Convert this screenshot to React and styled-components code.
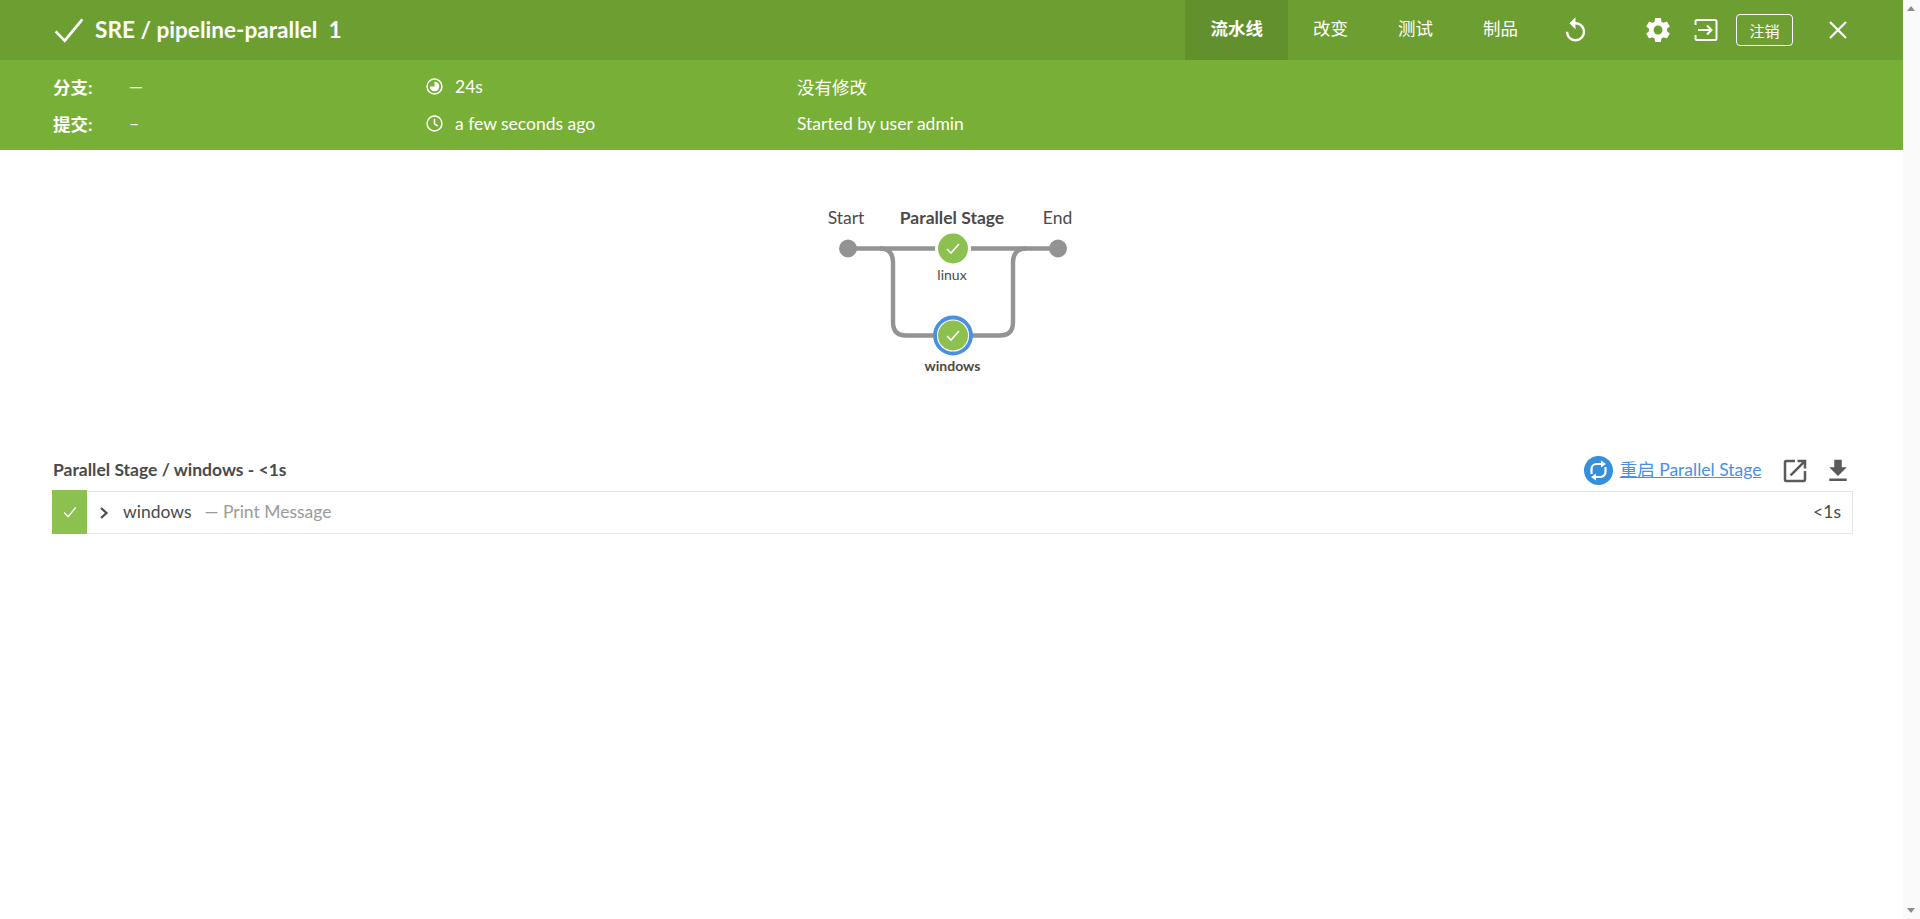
import React from "react";
import styled, { createGlobalStyle } from "styled-components";
import { MdFileDownload, MdOpenInNew, MdReplay, MdSettings } from "react-icons/md";

const GlobalStyle = createGlobalStyle`
  html, body {
    margin: 0;
    padding: 0;
    background: #fff;
  }
  body {
    font-family: Lato, "Noto Sans CJK SC", sans-serif;
    color: #4a4a4a;
    font-size: 17.5px;
  }
`;

const Page = styled.div`
  width: 1903px;
  min-height: 919px;
`;

const TopBar = styled.div`
  height: 60px;
  background: #6d9e32;
  color: #fff;
  display: flex;
  align-items: center;
  padding-left: 53px;
`;

const Title = styled.h1`
  margin: 0 0 2px 10px;
  font-size: 22.6px;
  font-weight: 700;
  white-space: pre;
  flex: 1;
`;

const Tabs = styled.nav`
  display: flex;
  align-self: stretch;
`;

const Tab = styled.a`
  display: flex;
  align-items: center;
  padding: 0 25px 6px;
  font-size: 17.5px;
  font-weight: ${(p) => (p.$active ? 700 : 400)};
  background: ${(p) => (p.$active ? "#61902c" : "transparent")};
`;

const IconSlot = styled.span`
  display: flex;
  align-items: center;
  justify-content: center;
  width: ${(p) => p.$w}px;
  margin-left: ${(p) => p.$ml || 0}px;
`;

const Logout = styled.button`
  width: 57px;
  height: 32px;
  margin-left: 18.5px;
  border: 1px solid #fff;
  border-radius: 4px;
  background: transparent;
  color: #fff;
  font: 15px Lato, "Noto Sans CJK SC", sans-serif;
  padding: 0;
`;

const SubBar = styled.div`
  height: 90px;
  box-sizing: border-box;
  background: #78b037;
  color: #fff;
  padding: 8px 53px 0;
  display: grid;
  grid-template-columns: 76px 297px 371px 1fr;
  grid-auto-rows: 37px;
  align-items: center;
  font-size: 17.5px;
`;

const Label = styled.strong`
  font-weight: 700;
`;

const WithIcon = styled.span`
  display: flex;
  align-items: center;
  gap: 12px;
`;

const Main = styled.main`
  padding: 0 50px 0 53px;
`;

const GraphWrap = styled.div`
  display: flex;
  justify-content: center;
  padding-top: 50px;
  height: 300px;
  box-sizing: border-box;
  svg text {
    font-family: Lato, "Noto Sans CJK SC", sans-serif;
    fill: #4a4a4a;
  }
`;

const LogHead = styled.div`
  display: flex;
  align-items: center;
  justify-content: space-between;
  height: 41px;
`;

const LogTitle = styled.h2`
  margin: 0 0 2px;
  font-size: 17.5px;
  font-weight: 700;
`;

const Actions = styled.div`
  display: flex;
  align-items: center;
`;

const RestartLink = styled.a`
  display: flex;
  align-items: center;
  gap: 7px;
  color: #4a90e2;
  font-size: 17.5px;
  span {
    text-decoration: underline;
    margin-bottom: 4px;
  }
`;

const ActionIcon = styled.span`
  display: flex;
  margin-left: ${(p) => p.$ml}px;
  color: #5a5a5a;
`;

const StepRow = styled.div`
  display: flex;
  align-items: center;
  height: 43px;
  box-sizing: border-box;
  border: 1px solid #e4e4e4;
  border-left: 0;
  padding-right: 11px;
`;

const StatusBox = styled.div`
  width: 35px;
  height: 44px;
  margin: -1px 0 0 -1px;
  background: #8cc04f;
  display: flex;
  align-items: center;
  justify-content: center;
`;

const Chevron = styled.span`
  display: flex;
  margin-left: 11px;
`;

const StepName = styled.span`
  margin: 0 0 2px 13px;
  font-size: 17.5px;
`;

const StepDesc = styled.span`
  margin: 0 0 2px 13px;
  font-size: 17.5px;
  color: #9b9b9b;
  flex: 1;
`;

const StepTime = styled.span`
  margin-bottom: 2px;
  font-size: 17.5px;
`;

const ScrollTrack = styled.div`
  position: fixed;
  top: 0;
  right: 0;
  bottom: 0;
  width: 17px;
  background: #fafafa;
`;

const ArrowUp = styled.div`
  position: absolute;
  top: 6px;
  left: 4px;
  width: 0;
  height: 0;
  border: 4.5px solid transparent;
  border-top: 0;
  border-bottom: 5px solid #8c8c8c;
`;

const ArrowDown = styled(ArrowUp)`
  top: auto;
  bottom: 6px;
  border: 4.5px solid transparent;
  border-bottom: 0;
  border-top: 5px solid #8c8c8c;
`;

const Check = ({ size = 12, width = 1.6, color = "#fff" }) => (
  <svg width={size} height={size} viewBox="0 0 12 12" fill="none" stroke={color} strokeWidth={width}>
    <path d="M1 6.5 L4.4 10 L11 2" />
  </svg>
);

function PipelineGraph() {
  const line = { stroke: "#949393", strokeWidth: 4.4, fill: "none" };
  return (
    <svg width="280" height="180" viewBox="813 200 280 180">
      <path d="M848 248.5 H1058" {...line} />
      <path d="M880 248.5 C888 248.5 893 253 893 262 V322 C893 331 897.5 335.5 906 335.5 H1000 C1008.5 335.5 1013 331 1013 322 V262 C1013 253 1018.5 248.5 1026.5 248.5" {...line} />
      <circle cx="848" cy="248.5" r="9" fill="#949393" />
      <circle cx="1058" cy="248.5" r="9" fill="#949393" />
      <circle cx="953" cy="248.5" r="18" fill="#fff" />
      <circle cx="953" cy="248.5" r="15" fill="#8cc04f" />
      <path d="M947 249 L951 253 L959 244" stroke="#fff" strokeWidth="1.6" fill="none" />
      <circle cx="953" cy="335.5" r="18" fill="#fff" stroke="#4a90e2" strokeWidth="3.8" />
      <circle cx="953" cy="335.5" r="15" fill="#8cc04f" />
      <path d="M947 336 L951 340 L959 331" stroke="#fff" strokeWidth="1.6" fill="none" />
      <text x="846" y="223.5" fontSize="17.5" textAnchor="middle">Start</text>
      <text x="952" y="223.5" fontSize="17.5" fontWeight="700" textAnchor="middle">Parallel Stage</text>
      <text x="1057.5" y="223.5" fontSize="17.5" textAnchor="middle">End</text>
      <text x="952" y="280" fontSize="14" textAnchor="middle">linux</text>
      <text x="952.5" y="371" fontSize="14" fontWeight="700" textAnchor="middle">windows</text>
    </svg>
  );
}

function LogBlock() {
  return (
    <>
      <GraphWrap>
        <PipelineGraph />
      </GraphWrap>
      <LogHead>
        <LogTitle>Parallel Stage / windows - &lt;1s</LogTitle>
        <Actions>
          <RestartLink>
            <svg width="29" height="29" viewBox="0 0 29 29">
              <circle cx="14.5" cy="14.5" r="14.5" fill="#368fdb" />
              <g fill="none" stroke="#fff" strokeWidth="2.2">
                <path d="M7.5 18 V13 A5 5 0 0 1 12.5 8 H18" />
                <path d="M21.5 11 V16 A5 5 0 0 1 16.5 21 H11" />
              </g>
              <path d="M17 4.5 L22 8 L17 11.5 Z M12 17.5 L7 21 L12 24.5 Z" fill="#fff" />
            </svg>
            <span>重启 Parallel Stage</span>
          </RestartLink>
          <ActionIcon $ml={18.6}><MdOpenInNew size={30} /></ActionIcon>
          <ActionIcon $ml={13}><MdFileDownload size={30} /></ActionIcon>
        </Actions>
      </LogHead>
      <StepRow>
        <StatusBox><Check size={14} width={1.2} /></StatusBox>
        <Chevron>
          <svg width="12" height="14" viewBox="0 0 12 14" fill="none" stroke="#4a4a4a" strokeWidth="2.2">
            <path d="M3 2 L8.5 7 L3 12" />
          </svg>
        </Chevron>
        <StepName>windows</StepName>
        <StepDesc>— Print Message</StepDesc>
        <StepTime>&lt;1s</StepTime>
      </StepRow>
    </>
  );
}

export default function App() {
  return (
    <Page>
      <GlobalStyle />
      <TopBar>
        <Check size={32} width={1} />
        <Title>SRE / pipeline-parallel  1</Title>
        <Tabs>
          <Tab $active>流水线</Tab>
          <Tab>改变</Tab>
          <Tab>测试</Tab>
          <Tab>制品</Tab>
        </Tabs>
        <IconSlot $w={32} $ml={17}>
          <MdReplay size={29} color="#fff" />
        </IconSlot>
        <IconSlot $w={30} $ml={50.8}>
          <MdSettings size={30} color="#fff" />
        </IconSlot>
        <IconSlot $w={24} $ml={20.8}>
          <svg width="24" height="24" viewBox="0 0 24 24" fill="none" stroke="#fff" strokeWidth="2">
            <path d="M1.5 7 V3.5 Q1.5 2 3 2 H21 Q22.5 2 22.5 3.5 V20.5 Q22.5 22 21 22 H3 Q1.5 22 1.5 20.5 V17" />
            <path d="M4 12 H17.5 M13 7.5 L17.5 12 L13 16.5" />
          </svg>
        </IconSlot>
        <Logout>注销</Logout>
        <IconSlot $w={22} $ml={34}>
          <svg width="20" height="20" viewBox="0 0 20 20" stroke="#fff" strokeWidth="2.2">
            <path d="M2 2 L18 18 M18 2 L2 18" />
          </svg>
        </IconSlot>
        <IconSlot $w={54} />
      </TopBar>
      <SubBar>
        <Label>分支:</Label>
        <span>—</span>
        <WithIcon>
          <svg width="17" height="17" viewBox="0 0 16 16">
            <circle cx="8" cy="8" r="7" fill="none" stroke="#fff" strokeWidth="1.4" />
            <path d="M8 3.5 A4.5 4.5 0 1 1 3.5 8 H8 Z" fill="#fff" />
          </svg>
          24s
        </WithIcon>
        <span>没有修改</span>
        <Label>提交:</Label>
        <span>–</span>
        <WithIcon>
          <svg width="17" height="17" viewBox="0 0 16 16" fill="none" stroke="#fff" strokeWidth="1.4">
            <circle cx="8" cy="8" r="7" />
            <path d="M8 3.5 V8.3 L11 10.5" />
          </svg>
          a few seconds ago
        </WithIcon>
        <span>Started by user admin</span>
      </SubBar>
      <Main>
        <LogBlock />
      </Main>
      <ScrollTrack>
        <ArrowUp />
        <ArrowDown />
      </ScrollTrack>
    </Page>
  );
}
